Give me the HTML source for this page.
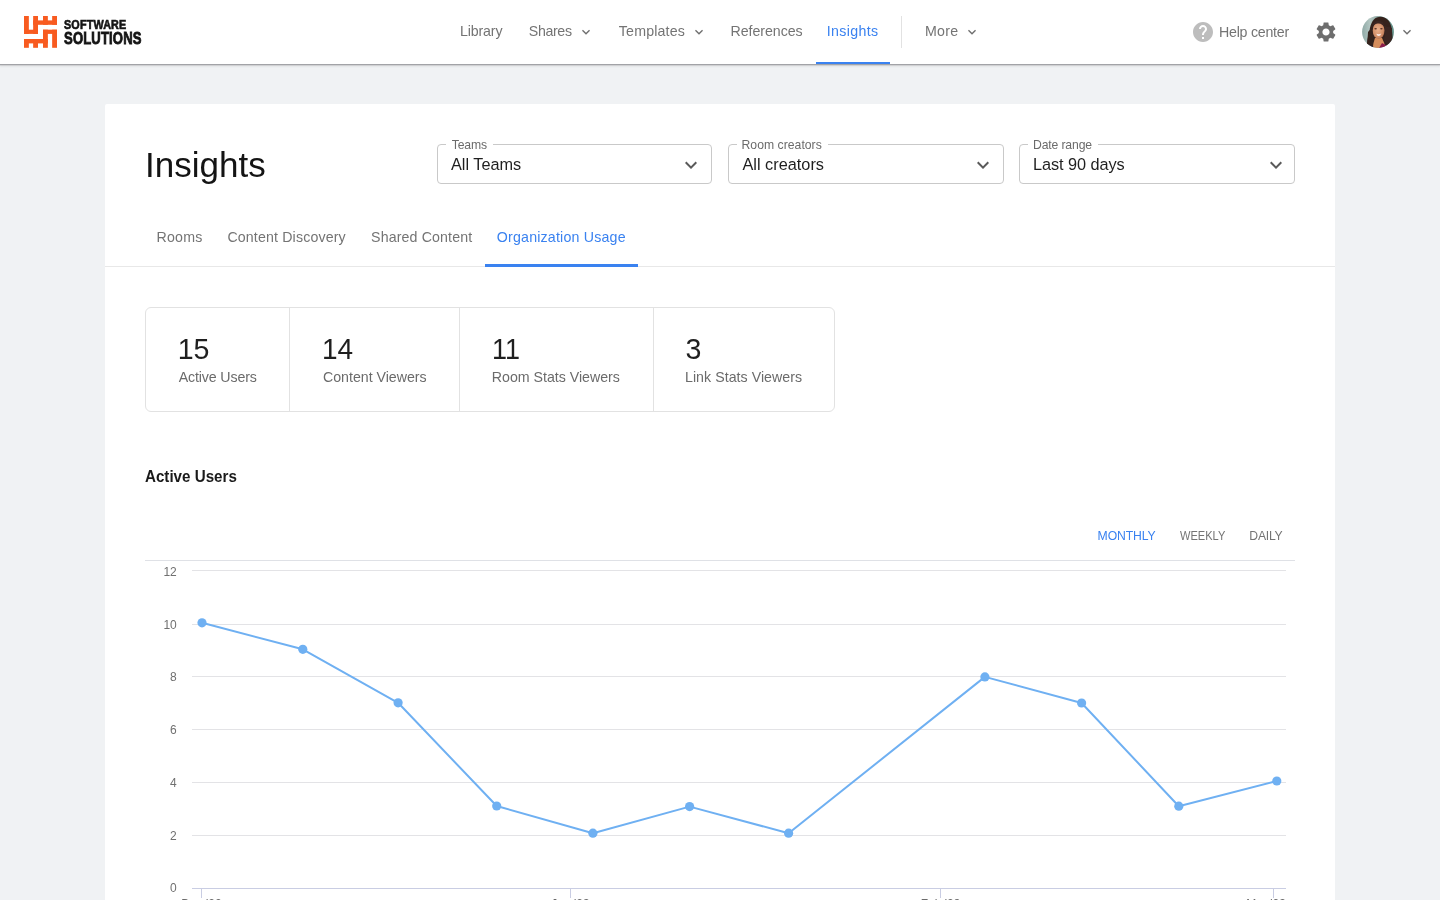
<!DOCTYPE html>
<html lang="en">
<head>
<meta charset="utf-8">
<title>Insights</title>
<style>
*{box-sizing:border-box;margin:0;padding:0}
html,body{width:1440px;height:900px;overflow:hidden}
body{background:#f0f2f4;font-family:"Liberation Sans",sans-serif;position:relative}
#wrap{position:absolute;left:0;top:0;width:1440px;height:900px;overflow:hidden;will-change:transform}
.abs{position:absolute}
.t{position:absolute;white-space:nowrap;line-height:1;font-family:"Liberation Sans",sans-serif}
#nav{position:absolute;left:0;top:0;width:1440px;height:64px;background:#fff;box-shadow:0 1px 0 #a2a3a7,0 2px 1px rgba(0,0,0,.10),0 3px 2px rgba(0,0,0,.04)}
#card{position:absolute;left:105px;top:104px;width:1230px;height:820px;background:#fff;border-radius:2px}
.sel{position:absolute;top:144.100px;height:40.100px;border:1px solid #c9c9c9;border-radius:4px}
.notch{position:absolute;top:143px;height:4px;background:#fff}
.hl{position:absolute;height:1px}
svg{position:absolute;overflow:visible}
</style>
</head>
<body>
<div id="wrap">
<div id="nav"></div>
<div id="card"></div>

<!-- logo -->
<svg id="logo" style="left:24px;top:16px" width="33" height="32" viewBox="0 0 33 32">
 <g fill="#f85b20">
  <rect x="0.00" y="0.00" width="4.85" height="17.90"/>
  <rect x="9.15" y="0.00" width="4.85" height="17.90"/>
  <rect x="0.00" y="13.70" width="14.00" height="4.20"/>
  <rect x="9.15" y="4.40" width="23.85" height="4.40"/>
  <rect x="19.00" y="0.00" width="4.85" height="8.80"/>
  <rect x="28.15" y="0.00" width="4.85" height="8.80"/>
  <rect x="19.00" y="13.70" width="4.85" height="18.10"/>
  <rect x="28.15" y="13.70" width="4.85" height="18.10"/>
  <rect x="19.00" y="13.70" width="14.00" height="4.20"/>
  <rect x="0.00" y="23.00" width="23.85" height="4.40"/>
  <rect x="0.00" y="23.00" width="4.85" height="8.80"/>
  <rect x="9.15" y="23.00" width="4.85" height="8.80"/>
 </g>
</svg>
<span class="t" id="lg1" style="left:63.8px;top:17.6px;font-size:13.2px;font-weight:700;color:#141414;transform:scaleX(.818);transform-origin:0 0;letter-spacing:.2px;-webkit-text-stroke:.65px #141414">SOFTWARE</span>
<span class="t" id="lg2" style="left:63.7px;top:29.6px;font-size:17.3px;font-weight:700;color:#141414;transform:scaleX(.757);transform-origin:0 0;letter-spacing:.2px;-webkit-text-stroke:.85px #141414">SOLUTIONS</span>

<!-- nav underline + divider -->
<div class="abs" style="left:816px;top:62px;width:74.4px;height:2.300px;background:#3a82f0"></div>
<div class="abs" style="left:901.4px;top:16px;width:1px;height:32px;background:#e2e2e2"></div>

<!-- nav chevrons -->
<svg style="left:577.5px;top:23.5px" width="16" height="16" viewBox="0 0 24 24"><path fill="#6e6e6e" d="M7.41 8.59L12 13.17l4.59-4.58L18 10l-6 6-6-6 1.41-1.41z"/></svg>
<svg style="left:691px;top:23.5px" width="16" height="16" viewBox="0 0 24 24"><path fill="#6e6e6e" d="M7.41 8.59L12 13.17l4.59-4.58L18 10l-6 6-6-6 1.41-1.41z"/></svg>
<svg style="left:963.8px;top:23.5px" width="16" height="16" viewBox="0 0 24 24"><path fill="#6e6e6e" d="M7.41 8.59L12 13.17l4.59-4.58L18 10l-6 6-6-6 1.41-1.41z"/></svg>
<svg style="left:1399px;top:24px" width="16" height="16" viewBox="0 0 24 24"><path fill="#6e6e6e" d="M7.41 8.59L12 13.17l4.59-4.58L18 10l-6 6-6-6 1.41-1.41z"/></svg>

<!-- help icon -->
<svg style="left:1191px;top:20px" width="24" height="24" viewBox="0 0 24 24"><path fill="#bdbdbd" d="M12 2C6.48 2 2 6.48 2 12s4.480 10 10 10 10-4.480 10-10S17.520 2 12 2zm1 17h-2v-2h2v2zm2.070-7.750l-.9.920C13.450 12.900 13 13.500 13 15h-2v-.5c0-1.100.450-2.100 1.170-2.830l1.240-1.260c.370-.360.590-.860.590-1.410 0-1.100-.9-2-2-2s-2 .9-2 2H8c0-2.210 1.790-4 4-4s4 1.790 4 4c0 .880-.360 1.680-.930 2.250z"/></svg>

<!-- gear -->
<svg style="left:1314px;top:20px" width="24" height="24" viewBox="0 0 24 24"><path fill="#6e6e6e" d="M19.14 12.94c.04-.3.06-.61.06-.94 0-.32-.02-.64-.07-.94l2.030-1.580c.18-.14.23-.41.12-.61l-1.920-3.320c-.12-.22-.37-.29-.59-.22l-2.390.96c-.5-.38-1.030-.7-1.620-.94l-.36-2.540c-.04-.24-.24-.41-.48-.41h-3.840c-.24 0-.43.17-.47.41l-.36 2.540c-.59.24-1.130.57-1.620.94l-2.390-.96c-.22-.08-.47 0-.59.22L2.740 8.870c-.12.210-.08.470.12.610l2.030 1.580c-.05.3-.09.630-.09.940s.02.640.07.940l-2.030 1.580c-.18.140-.23.410-.12.610l1.920 3.320c.12.220.37.290.59.220l2.390-.96c.5.380 1.030.7 1.620.94l.36 2.540c.05.240.24.410.48.410h3.840c.24 0 .44-.17.470-.41l.36-2.540c.59-.24 1.130-.56 1.620-.94l2.390.96c.22.080.47 0 .59-.22l1.920-3.320c.12-.22.070-.47-.12-.61l-2.010-1.580zM12 15.600c-1.980 0-3.600-1.620-3.600-3.600s1.620-3.600 3.600-3.600 3.600 1.620 3.600 3.600-1.620 3.600-3.600 3.600z"/></svg>

<!-- avatar -->
<svg id="avatar" style="left:1362px;top:16px" width="32" height="32" viewBox="0 0 32 32">
 <defs>
  <clipPath id="avc"><circle cx="16" cy="16" r="15.900"/></clipPath>
  <radialGradient id="face" cx="45%" cy="45%" r="62%"><stop offset="0" stop-color="#eab08c"/><stop offset=".7" stop-color="#d18e68"/><stop offset="1" stop-color="#a8664a"/></radialGradient>
  <linearGradient id="bgg" x1="0" x2="1" y1="0" y2="0"><stop offset="0" stop-color="#8fa9a6"/><stop offset=".25" stop-color="#b3c6c2"/><stop offset=".5" stop-color="#93aaa6"/><stop offset="1" stop-color="#5f8f87"/></linearGradient>
  <filter id="bl" x="-20%" y="-20%" width="140%" height="140%"><feGaussianBlur stdDeviation="0.750"/></filter>
 </defs>
 <g clip-path="url(#avc)">
  <rect width="32" height="32" fill="url(#bgg)"/>
  <g filter="url(#bl)">
   <path d="M5.500 33C4 27 6 21 7.500 15C8.500 8 11 1 18 .8C24.500 .6 28.800 5.500 29.800 13C30.600 20 31 26 30.200 33Z" fill="#35231f"/>
   <path d="M13 22h7l2 4.500 2 6.500H10.500l1-6z" fill="#d68d5c"/>
   <ellipse cx="16.600" cy="14.600" rx="5.900" ry="8.300" fill="url(#face)"/>
   <path d="M10.300 11C11 6 14 4.500 17 4.700C20.500 5 22.500 7.500 23 12C21 8.500 18.500 7 15.500 7.500C13 8 11.500 9 10.300 11Z" fill="#3a2621"/>
   <path d="M22.500 10C24 15 23 21 21.500 24.500C24 27 26 29 29.500 30L30 12Z" fill="#3b2722"/>
   <path d="M10.600 11C9.800 16 10.500 21 12 24C10 27 8 29.500 5 31L6 16Z" fill="#35231f"/>
   <path d="M16.500 33l3.500-6 4.500 2.500 1 3.500z" fill="#8a1b4b"/>
   <path d="M5 33l2-4.500 4 1.500 1 3z" fill="#2a1d2a"/>
   <ellipse cx="13.600" cy="12.700" rx="1.300" ry=".75" fill="#5b3527"/>
   <ellipse cx="19.400" cy="12.700" rx="1.300" ry=".75" fill="#5b3527"/>
   <path d="M14.300 17.700q2.500 1 5 -.2q-1 2.600-2.700 2.600q-1.600 0-2.300-2.400z" fill="#fbe9e4"/>
  </g>
 </g>
</svg>

<!-- selects -->
<div class="sel" style="left:436.500px;width:275.800px"></div>
<div class="sel" style="left:727.800px;width:275.900px"></div>
<div class="sel" style="left:1018.900px;width:276.200px"></div>
<div class="notch" style="left:445.500px;width:47px"></div>
<div class="notch" style="left:737px;width:90.500px"></div>
<div class="notch" style="left:1028px;width:69.500px"></div>
<svg style="left:679.200px;top:152.500px" width="24" height="24" viewBox="0 0 24 24"><path fill="#5a5a5a" d="M7.41 8.59L12 13.17l4.59-4.58L18 10l-6 6-6-6 1.410-1.410z"/></svg>
<svg style="left:970.500px;top:152.500px" width="24" height="24" viewBox="0 0 24 24"><path fill="#5a5a5a" d="M7.41 8.59L12 13.17l4.59-4.58L18 10l-6 6-6-6 1.410-1.410z"/></svg>
<svg style="left:1264.200px;top:152.500px" width="24" height="24" viewBox="0 0 24 24"><path fill="#5a5a5a" d="M7.41 8.59L12 13.17l4.59-4.58L18 10l-6 6-6-6 1.410-1.410z"/></svg>

<!-- tab bar -->
<div class="abs" style="left:105px;top:265.700px;width:1230px;height:1.500px;background:#e8e8e8"></div>
<div class="abs" style="left:485px;top:264.400px;width:152.500px;height:2.600px;background:#3a82f0"></div>

<!-- stats box -->
<div class="abs" style="left:145px;top:307px;width:690.200px;height:104.700px;border:1px solid #e2e2e2;border-radius:6px"></div>
<div class="abs" style="left:289.200px;top:308px;width:1px;height:103px;background:#e2e2e2"></div>
<div class="abs" style="left:459px;top:308px;width:1px;height:103px;background:#e2e2e2"></div>
<div class="abs" style="left:652.500px;top:308px;width:1px;height:103px;background:#e2e2e2"></div>

<!-- chart -->
<svg id="chart" style="left:0;top:0" width="1440" height="900" viewBox="0 0 1440 900">
 <line x1="145" x2="1295" y1="560.500" y2="560.500" stroke="#dfe1e6" stroke-width="1"/>
 <g stroke="#e3e3e6" stroke-width="1">
  <line x1="192" x2="1286" y1="570.500" y2="570.500"/>
  <line x1="192" x2="1286" y1="624.500" y2="624.500"/>
  <line x1="192" x2="1286" y1="676.500" y2="676.500"/>
  <line x1="192" x2="1286" y1="729.500" y2="729.500"/>
  <line x1="192" x2="1286" y1="782.500" y2="782.500"/>
  <line x1="192" x2="1286" y1="835.500" y2="835.500"/>
 </g>
 <g stroke="#c9cde3" stroke-width="1">
  <line x1="192" x2="1286" y1="888.500" y2="888.500"/>
  <line x1="201.500" x2="201.500" y1="888" y2="898"/>
  <line x1="570.500" x2="570.500" y1="888" y2="898"/>
  <line x1="940.500" x2="940.500" y1="888" y2="898"/>
  <line x1="1273.500" x2="1273.500" y1="888" y2="898"/>
 </g>
 <polyline fill="none" stroke="#6fb0f2" stroke-width="2" stroke-linejoin="round" points="202,622.800 302.800,649.300 398.100,702.800 496.700,806 592.900,833.200 689.600,806.600 788.600,833.200 984.900,676.900 1081.600,703 1178.800,806.200 1276.800,781"/>
 <g fill="#6fb0f2">
  <circle cx="202" cy="622.800" r="4.600"/><circle cx="302.800" cy="649.300" r="4.600"/><circle cx="398.100" cy="702.800" r="4.600"/>
  <circle cx="496.700" cy="806" r="4.600"/><circle cx="592.900" cy="833.200" r="4.600"/><circle cx="689.600" cy="806.600" r="4.600"/>
  <circle cx="788.600" cy="833.200" r="4.600"/><circle cx="984.900" cy="676.900" r="4.600"/><circle cx="1081.600" cy="703" r="4.600"/>
  <circle cx="1178.800" cy="806.200" r="4.600"/><circle cx="1276.800" cy="781" r="4.600"/>
 </g>
 <g font-family="Liberation Sans, sans-serif" font-size="12" fill="#707070" text-anchor="end">
  <text x="176.800" y="576.200">12</text>
  <text x="176.800" y="629">10</text>
  <text x="176.800" y="680.500">8</text>
  <text x="176.800" y="733.500">6</text>
  <text x="176.800" y="786.500">4</text>
  <text x="176.800" y="839.500">2</text>
  <text x="176.800" y="891.800">0</text>
 </g>
 <g font-family="Liberation Sans, sans-serif" font-size="12" fill="#6b6b6b" text-anchor="middle">
  <text x="201.500" y="907.800">Dec '22</text>
  <text x="570.500" y="907.800">Jan '23</text>
  <text x="940.500" y="907.800">Feb '23</text>
  <text x="1266" y="907.800">Mar '23</text>
 </g>
</svg>

<span class="t" id="t0" style="left:459.90px;top:23.8px;font-size:14.2px;font-weight:400;color:#747474;letter-spacing:-0.129px">Library</span>
<span class="t" id="t1" style="left:528.80px;top:23.8px;font-size:14.2px;font-weight:400;color:#747474;letter-spacing:-0.352px">Shares</span>
<span class="t" id="t2" style="left:618.80px;top:23.8px;font-size:14.2px;font-weight:400;color:#747474;letter-spacing:0.179px">Templates</span>
<span class="t" id="t3" style="left:730.60px;top:23.8px;font-size:14.2px;font-weight:400;color:#747474;letter-spacing:-0.062px">References</span>
<span class="t" id="t4" style="left:826.80px;top:23.8px;font-size:14.2px;font-weight:400;color:#3a82f0;letter-spacing:0.343px">Insights</span>
<span class="t" id="t5" style="left:925.00px;top:23.8px;font-size:14.2px;font-weight:400;color:#747474;letter-spacing:0.256px">More</span>
<span class="t" id="t6" style="left:1219.00px;top:24.8px;font-size:14.2px;font-weight:400;color:#747474;letter-spacing:-0.243px">Help center</span>
<span class="t" id="t7" style="left:144.90px;top:146.9px;font-size:35.0px;font-weight:400;color:#141414;letter-spacing:0.026px">Insights</span>
<span class="t" id="t8" style="left:451.70px;top:138.5px;font-size:12.2px;font-weight:400;color:#6b6b6b;letter-spacing:-0.150px">Teams</span>
<span class="t" id="t9" style="left:451.00px;top:155.8px;font-size:16.3px;font-weight:400;color:#1f1f1f;letter-spacing:-0.016px">All Teams</span>
<span class="t" id="t10" style="left:741.50px;top:138.5px;font-size:12.2px;font-weight:400;color:#6b6b6b;letter-spacing:0.031px">Room creators</span>
<span class="t" id="t11" style="left:742.50px;top:155.8px;font-size:16.3px;font-weight:400;color:#1f1f1f;letter-spacing:0.001px">All creators</span>
<span class="t" id="t12" style="left:1033.00px;top:138.5px;font-size:12.2px;font-weight:400;color:#6b6b6b;letter-spacing:-0.136px">Date range</span>
<span class="t" id="t13" style="left:1033.00px;top:155.8px;font-size:16.3px;font-weight:400;color:#1f1f1f;letter-spacing:-0.053px">Last 90 days</span>
<span class="t" id="t14" style="left:156.50px;top:230.0px;font-size:14.2px;font-weight:400;color:#747474;letter-spacing:0.239px">Rooms</span>
<span class="t" id="t15" style="left:227.40px;top:230.0px;font-size:14.2px;font-weight:400;color:#747474;letter-spacing:0.149px">Content Discovery</span>
<span class="t" id="t16" style="left:371.10px;top:230.0px;font-size:14.2px;font-weight:400;color:#747474;letter-spacing:0.128px">Shared Content</span>
<span class="t" id="t17" style="left:496.80px;top:230.0px;font-size:14.2px;font-weight:400;color:#3a82f0;letter-spacing:0.200px">Organization Usage</span>
<span class="t" id="t18" style="left:177.70px;top:334.6px;font-size:28.6px;font-weight:400;color:#1f1f1f;letter-spacing:-0.102px">15</span>
<span class="t" id="t19" style="left:322.24px;top:334.6px;font-size:28.6px;font-weight:400;color:#1f1f1f;letter-spacing:0.000px;transform:scaleX(0.9799);transform-origin:0 0">14</span>
<span class="t" id="t20" style="left:491.61px;top:334.6px;font-size:28.6px;font-weight:400;color:#1f1f1f;letter-spacing:0.000px;transform:scaleX(0.9447);transform-origin:0 0">11</span>
<span class="t" id="t21" style="left:685.50px;top:334.6px;font-size:28.6px;font-weight:400;color:#1f1f1f;letter-spacing:0.000px">3</span>
<span class="t" id="t22" style="left:178.70px;top:369.5px;font-size:14.2px;font-weight:400;color:#6b6b6b;letter-spacing:-0.130px">Active Users</span>
<span class="t" id="t23" style="left:323.00px;top:369.5px;font-size:14.2px;font-weight:400;color:#6b6b6b;letter-spacing:-0.017px">Content Viewers</span>
<span class="t" id="t24" style="left:491.80px;top:369.5px;font-size:14.2px;font-weight:400;color:#6b6b6b;letter-spacing:-0.010px">Room Stats Viewers</span>
<span class="t" id="t25" style="left:685.00px;top:369.5px;font-size:14.2px;font-weight:400;color:#6b6b6b;letter-spacing:0.038px">Link Stats Viewers</span>
<span class="t" id="t26" style="left:145.40px;top:468.0px;font-size:16.2px;font-weight:700;color:#1a1a1a;letter-spacing:0.000px;transform:scaleX(0.9360);transform-origin:0 0">Active Users</span>
<span class="t" id="t27" style="left:1097.60px;top:529.7px;font-size:12.2px;font-weight:400;color:#3a82f0;letter-spacing:-0.109px">MONTHLY</span>
<span class="t" id="t28" style="left:1180.20px;top:529.7px;font-size:12.2px;font-weight:400;color:#747474;letter-spacing:0.000px;transform:scaleX(0.9083);transform-origin:0 0">WEEKLY</span>
<span class="t" id="t29" style="left:1249.30px;top:529.7px;font-size:12.2px;font-weight:400;color:#747474;letter-spacing:-0.222px">DAILY</span>
</div>
</body>
</html>
